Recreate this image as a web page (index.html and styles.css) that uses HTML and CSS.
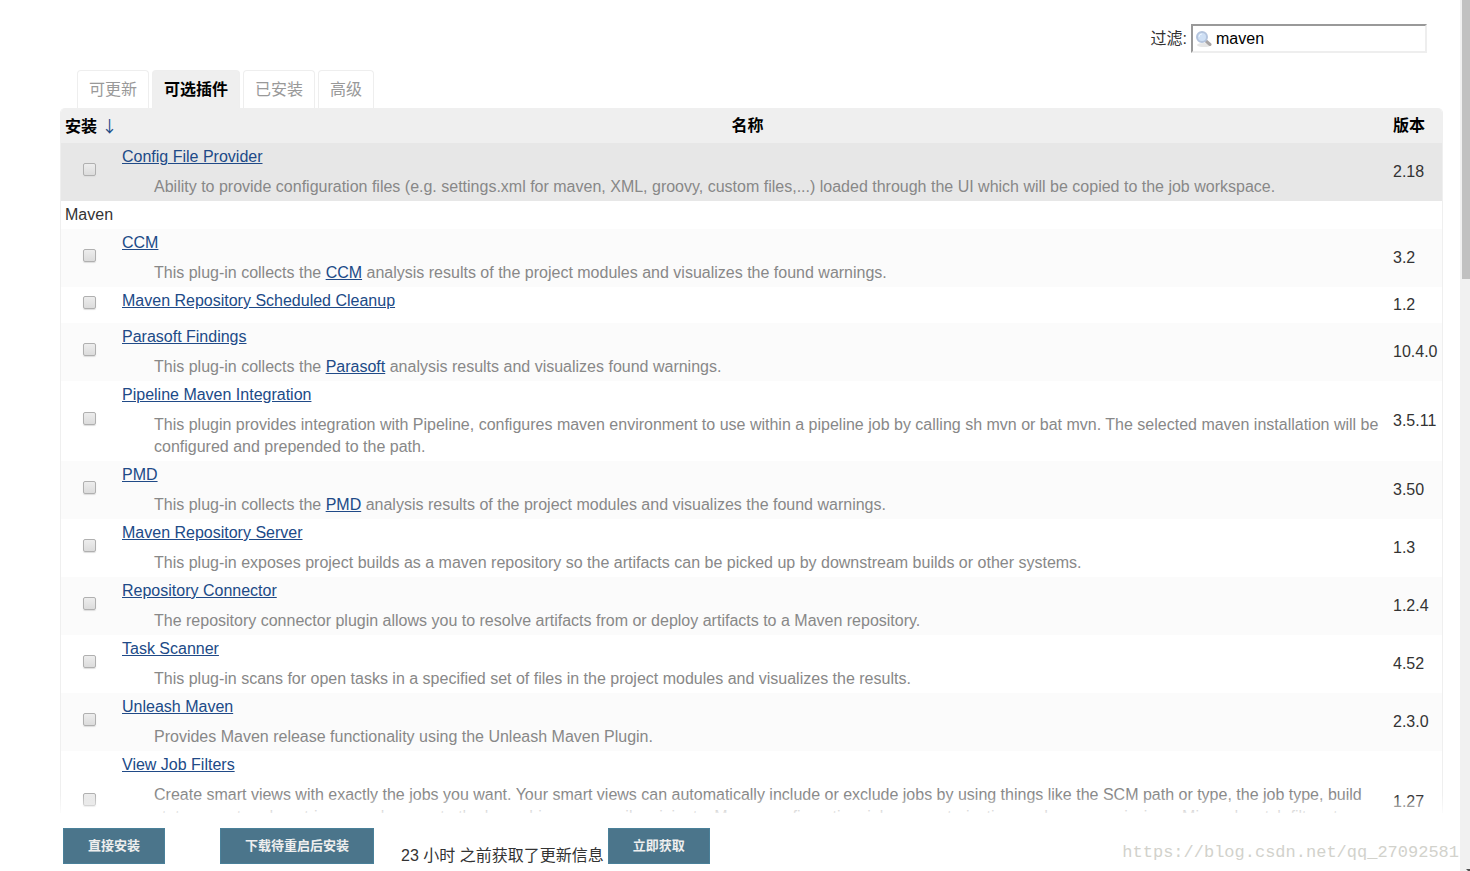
FILE: index.html
```html
<!DOCTYPE html>
<html lang="zh-CN">
<head>
    <meta charset="UTF-8">
    <meta name="viewport" content="width=device-width, initial-scale=1.0">
    <title>插件管理</title>
    <link rel="stylesheet" href="styles.css">
</head>
<body>

    <div class="page">
    <main class="content">
        <form class="filter">
            <label for="filter-box">过滤:</label>
            <div class="search">
                <svg class="search-icon" width="16" height="16" viewBox="0 0 16 16" aria-hidden="true">
                    <ellipse cx="8" cy="14" rx="7" ry="2" fill="#e6e6e6"/>
                    <path d="M10 10L14 13.500" stroke="#a8a4a4" stroke-width="3" stroke-linecap="round"/>
                    <circle cx="6" cy="6" r="5" fill="#cfe0f5" stroke="#b4c4dd" stroke-width="2"/>
                    <path d="M3 6A3 3 0 0 1 6 3" fill="none" stroke="#eef6ff" stroke-width="1"/>
                </svg>
                <input type="text" id="filter-box" class="filter-box" value="maven">
            </div>
        </form>

        <nav class="tabs">
            <a class="tab" href="#updates">可更新</a>
            <a class="tab active" href="#available">可选插件</a>
            <a class="tab" href="#installed">已安装</a>
            <a class="tab" href="#advanced">高级</a>
        </nav>

        <table class="plugins">
            <thead>
                <tr>
                    <th class="col-install">安装 <span class="sort">↓</span></th>
                    <th class="col-name">名称</th>
                    <th class="col-version">版本</th>
                </tr>
            </thead>
            <tbody>
                <tr class="current">
                    <td class="pick"><input type="checkbox" aria-label="Config File Provider"></td>
                    <td>
                        <a href="#config-file-provider">Config File Provider</a>
                        <div class="excerpt">Ability to provide configuration files (e.g. settings.xml for maven, XML, groovy, custom files,...) loaded through the UI which will be copied to the job workspace.</div>
                    </td>
                    <td>2.18</td>
                </tr>
                <tr>
                    <td class="category" colspan="3">Maven</td>
                </tr>
                <tr class="odd">
                    <td class="pick"><input type="checkbox" aria-label="CCM"></td>
                    <td>
                        <a href="#ccm">CCM</a>
                        <div class="excerpt">This plug-in collects the <a href="#ccm-site">CCM</a> analysis results of the project modules and visualizes the found warnings.</div>
                    </td>
                    <td>3.2</td>
                </tr>
                <tr>
                    <td class="pick"><input type="checkbox" aria-label="Maven Repository Scheduled Cleanup"></td>
                    <td>
                        <a href="#repo-cleanup">Maven Repository Scheduled Cleanup</a>
                        <div class="excerpt"></div>
                    </td>
                    <td>1.2</td>
                </tr>
                <tr class="odd">
                    <td class="pick"><input type="checkbox" aria-label="Parasoft Findings"></td>
                    <td>
                        <a href="#parasoft">Parasoft Findings</a>
                        <div class="excerpt">This plug-in collects the <a href="#parasoft-site">Parasoft</a> analysis results and visualizes found warnings.</div>
                    </td>
                    <td>10.4.0</td>
                </tr>
                <tr>
                    <td class="pick"><input type="checkbox" aria-label="Pipeline Maven Integration"></td>
                    <td>
                        <a href="#pipeline-maven">Pipeline Maven Integration</a>
                        <div class="excerpt">This plugin provides integration with Pipeline, configures maven environment to use within a pipeline job by calling sh mvn or bat mvn. The selected maven installation will be configured and prepended to the path.</div>
                    </td>
                    <td>3.5.11</td>
                </tr>
                <tr class="odd">
                    <td class="pick"><input type="checkbox" aria-label="PMD"></td>
                    <td>
                        <a href="#pmd">PMD</a>
                        <div class="excerpt">This plug-in collects the <a href="#pmd-site">PMD</a> analysis results of the project modules and visualizes the found warnings.</div>
                    </td>
                    <td>3.50</td>
                </tr>
                <tr>
                    <td class="pick"><input type="checkbox" aria-label="Maven Repository Server"></td>
                    <td>
                        <a href="#repo-server">Maven Repository Server</a>
                        <div class="excerpt">This plug-in exposes project builds as a maven repository so the artifacts can be picked up by downstream builds or other systems.</div>
                    </td>
                    <td>1.3</td>
                </tr>
                <tr class="odd">
                    <td class="pick"><input type="checkbox" aria-label="Repository Connector"></td>
                    <td>
                        <a href="#repo-connector">Repository Connector</a>
                        <div class="excerpt">The repository connector plugin allows you to resolve artifacts from or deploy artifacts to a Maven repository.</div>
                    </td>
                    <td>1.2.4</td>
                </tr>
                <tr>
                    <td class="pick"><input type="checkbox" aria-label="Task Scanner"></td>
                    <td>
                        <a href="#task-scanner">Task Scanner</a>
                        <div class="excerpt">This plug-in scans for open tasks in a specified set of files in the project modules and visualizes the results.</div>
                    </td>
                    <td>4.52</td>
                </tr>
                <tr class="odd">
                    <td class="pick"><input type="checkbox" aria-label="Unleash Maven"></td>
                    <td>
                        <a href="#unleash">Unleash Maven</a>
                        <div class="excerpt">Provides Maven release functionality using the Unleash Maven Plugin.</div>
                    </td>
                    <td>2.3.0</td>
                </tr>
                <tr>
                    <td class="pick"><input type="checkbox" aria-label="View Job Filters"></td>
                    <td>
                        <a href="#view-job-filters">View Job Filters</a>
                        <div class="excerpt">Create smart views with exactly the jobs you want. Your smart views can automatically include or exclude jobs by using things like the SCM path or type, the job type, build statuses or trends or triggers, relevance to the logged-in user, email recipients, Maven configuration, job parameterization, and user permissions. Mix and match filters to narrow down to exactly what you want.</div>
                    </td>
                    <td>1.27</td>
                </tr>
            </tbody>
        </table>
    </main>

    <!-- buttons stay at the bottom, the table fades out above them -->
    <footer class="bottom-bar">
        <div class="fade"></div>
        <button type="button">直接安装</button>
        <button type="button" class="after-restart">下载待重启后安装</button>
        <div class="update-info">
            <span class="status">23 小时 之前获取了更新信息</span>
            <button type="button">立即获取</button>
        </div>
        <span class="watermark">https://blog.csdn.net/qq_27092581</span>
    </footer>
    </div>

    <div class="scrollbar">
        <div class="thumb"></div>
        <svg class="arrow" width="4" height="2" viewBox="0 0 4 2" aria-hidden="true"><path d="M0 0H4V2H2Z" fill="#505050"/></svg>
    </div>

</body>
</html>
```
FILE: styles.css
```css
* {
    box-sizing: border-box;
}
body {
    margin: 0;
    height: 100vh;
    overflow: hidden;
    display: flex;
    font-family: "Liberation Sans", Arial, "Noto Sans CJK SC", sans-serif;
    font-size: 16px;
    line-height: 22px;
    color: #333;
    background-color: #fff;
}
a {
    color: #204a87;
}
.page {
    flex: 1;
    display: flex;
    flex-direction: column;
}
.content {
    flex: 1;
    min-height: 0;
    overflow: hidden;
    padding: 24px 17px 0 60px;
}

/* filter */
.filter {
    display: flex;
    justify-content: flex-end;
    align-items: center;
    gap: 4px;
    margin-right: 16px;
}
.search {
    position: relative;
}
.search-icon {
    position: absolute;
    left: 5px;
    top: 7px;
}
.filter-box {
    display: block;
    width: 236px;
    height: 29px;
    padding: 0 0 0 23px;
    border: 2px solid;
    border-color: #999 #eee #eee #999;
    font-family: inherit;
    font-size: 16px;
    color: #000;
    background-color: #fff;
}

/* tabs */
.tabs {
    display: flex;
    gap: 3px;
    margin: 17px 0 0 17px;
}
.tab {
    height: 38px;
    padding: 0 11px;
    border: 1px solid #eee;
    border-bottom: none;
    border-radius: 4px 4px 0 0;
    line-height: 38px;
    color: #999;
    text-decoration: none;
}
.tab.active {
    background-color: #efefef;
    color: #000;
    font-weight: bold;
}

/* plugin table */
.plugins {
    width: 100%;
    border-collapse: separate;
    border-spacing: 0;
    border: 1px solid #efefef;
    border-top: none;
    border-radius: 5px 5px 0 0;
    overflow: hidden;
}
.plugins th {
    height: 35px;
    padding: 3px 4px;
    background-color: #efefef;
    color: #000;
}
.plugins .col-install {
    width: 57px;
    padding-right: 0;
    text-align: left;
    white-space: nowrap;
}
.plugins .col-name {
    padding-right: 16px;
}
.plugins .col-version {
    width: 53px;
    text-align: left;
}
.sort {
    display: inline-block;
    width: 16px;
    font-family: "Noto Sans CJK SC", sans-serif;
    font-weight: normal;
    color: #204a87;
}
.plugins td {
    padding: 3px 4px;
}
.plugins .pick {
    text-align: center;
}
.odd {
    background-color: #fbfbfb;
}
.current {
    background-color: #e7e7e7;
}
.excerpt {
    margin: 8px 0 0 32px;
    color: #888;
}
.pick input {
    appearance: none;
    width: 13px;
    height: 13px;
    margin: 3px;
    border: 1px solid #b0b0b0;
    border-radius: 2px;
    background: linear-gradient(#ededed, #dcdcdc);
    box-shadow: 0 1px 1px #ddd;
}

/* bottom bar */
.bottom-bar {
    position: relative;
    display: flex;
    align-items: flex-end;
    padding: 15px 1px 7px 63px;
    background-color: #fff;
}
.fade {
    position: absolute;
    left: 0;
    right: 0;
    bottom: 100%;
    height: 18px;
    background: linear-gradient(rgba(255, 255, 255, 0), rgba(255, 255, 255, 0.8));
}
.bottom-bar button {
    height: 36px;
    padding: 0 24px;
    border: 1px solid #4a8099;
    background-color: #4b758b;
    font-family: inherit;
    font-size: 13px;
    font-weight: bold;
    line-height: 32px;
    color: #eee;
}
.bottom-bar .after-restart {
    margin-left: 55px;
}
.update-info {
    display: flex;
    align-items: flex-end;
    gap: 4px;
    margin-left: 27px;
}
.status {
    line-height: 16px;
}
.watermark {
    margin-left: auto;
    font-family: "Liberation Mono", monospace;
    font-size: 17px;
    color: #d2d2cc;
}

/* scrollbar */
.scrollbar {
    display: flex;
    flex-direction: column;
    justify-content: space-between;
    width: 10px;
    padding-left: 2px;
    background-color: #f1f1f1;
}
.thumb {
    height: 32%;
    background-color: #c1c1c1;
}
.arrow {
    align-self: flex-end;
}
```
